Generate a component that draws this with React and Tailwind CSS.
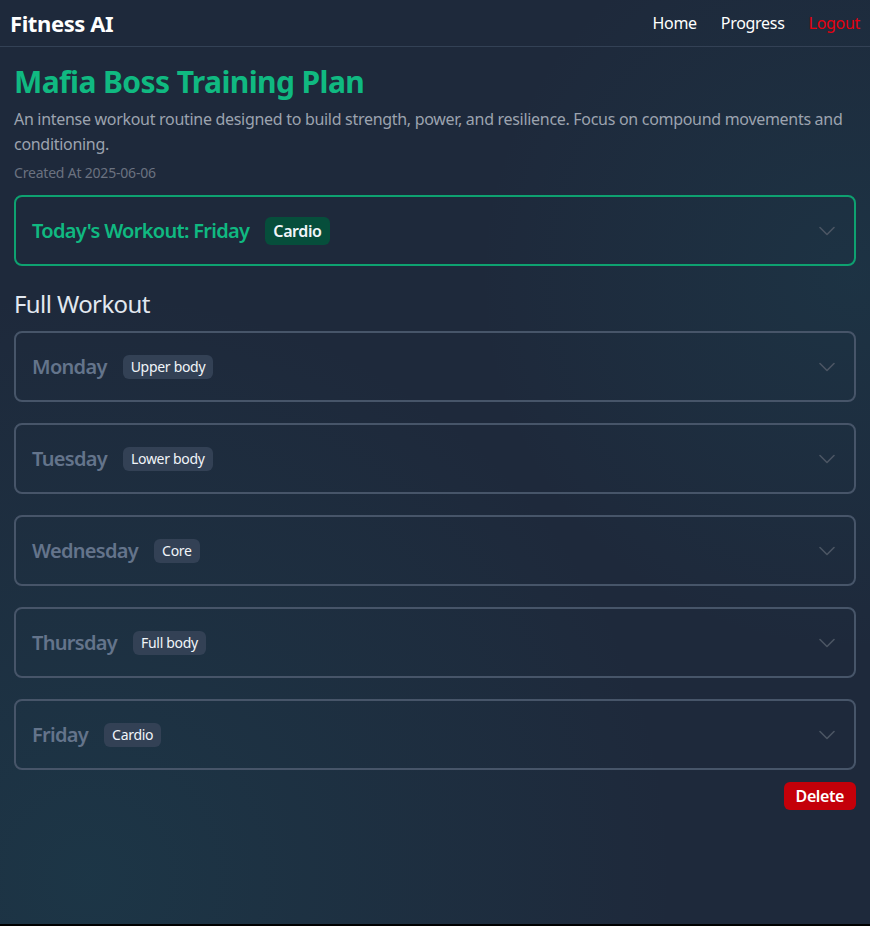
import React from "react";

const days = [
  { day: "Monday", tag: "Upper body" },
  { day: "Tuesday", tag: "Lower body" },
  { day: "Wednesday", tag: "Core" },
  { day: "Thursday", tag: "Full body" },
  { day: "Friday", tag: "Cardio" },
];

function Chevron() {
  return (
    <svg width="16" height="10" viewBox="0 0 16 10" fill="none" className="mr-[3px] shrink-0">
      <path d="M1 1.5 L8 8.5 L15 1.5" stroke="#4b5563" strokeWidth="1.6" strokeLinecap="round" strokeLinejoin="round" />
    </svg>
  );
}

export default function App() {
  return (
    <div className="h-[926px] bg-black font-['Noto_Sans','Open_Sans',sans-serif]">
      <div className="h-[924px] bg-[#1e293b] bg-[radial-gradient(circle_at_10%_95%,rgba(20,120,130,0.16),transparent_50%),radial-gradient(circle_at_98%_30%,rgba(20,120,130,0.12),transparent_35%)]">
        <nav className="h-[47px] flex items-center justify-between px-[10px] border-b border-[#334155]">
          <span className="text-[22px] font-bold text-white tracking-[-0.4px]">Fitness AI</span>
          <div className="flex items-center gap-6 text-base tracking-[-0.3px]">
            <span className="text-white">Home</span>
            <span className="text-white">Progress</span>
            <span className="text-[#e5000f]">Logout</span>
          </div>
        </nav>
        <main className="px-[14px] pt-[17px]">
          <h1 className="text-[30px] leading-9 font-bold text-[#10b981] tracking-[-0.6px]">Mafia Boss Training Plan</h1>
          <p className="mt-[7px] text-base leading-[25px] text-[#9ca3af] tracking-[-0.3px]">
            An intense workout routine designed to build strength, power, and resilience. Focus on compound movements and conditioning.
          </p>
          <p className="mt-1.5 text-sm leading-5 text-[#6b7280] tracking-[-0.2px]">Created At 2025-06-06</p>

          <div className="mt-3 h-[71px] rounded-lg border-2 border-[#0ea170] flex items-center justify-between pl-4 pr-4">
            <div className="flex items-center">
              <span className="text-xl font-semibold text-[#10b981] tracking-[-0.7px]">Today's Workout: Friday</span>
              <span className="ml-4 rounded-md bg-[#064e3b] px-2 py-[2px] text-base font-semibold text-[#f1f5f9] tracking-[-0.4px]">Cardio</span>
            </div>
            <Chevron />
          </div>

          <h2 className="mt-[22px] text-2xl leading-8 text-[#e2e8f0] tracking-[-0.6px]">Full Workout</h2>

          <div className="mt-[11px] flex flex-col gap-[21px]">
            {days.map((d) => (
              <div key={d.day} className="h-[71px] rounded-lg border-2 border-[#475569] flex items-center justify-between pl-4 pr-4">
                <div className="flex items-center">
                  <span className="text-xl font-semibold text-[#64748b] tracking-[-0.7px]">{d.day}</span>
                  <span className="ml-4 rounded-md bg-[#334155] px-2 py-[2px] text-sm text-[#f1f5f9] tracking-[-0.3px]">{d.tag}</span>
                </div>
                <Chevron />
              </div>
            ))}
          </div>

          <div className="mt-[12px] flex justify-end">
            <button className="h-[28px] rounded-md bg-[#c40009] px-3 text-base font-semibold text-white leading-none tracking-[-0.4px]">Delete</button>
          </div>
        </main>
      </div>
    </div>
  );
}
